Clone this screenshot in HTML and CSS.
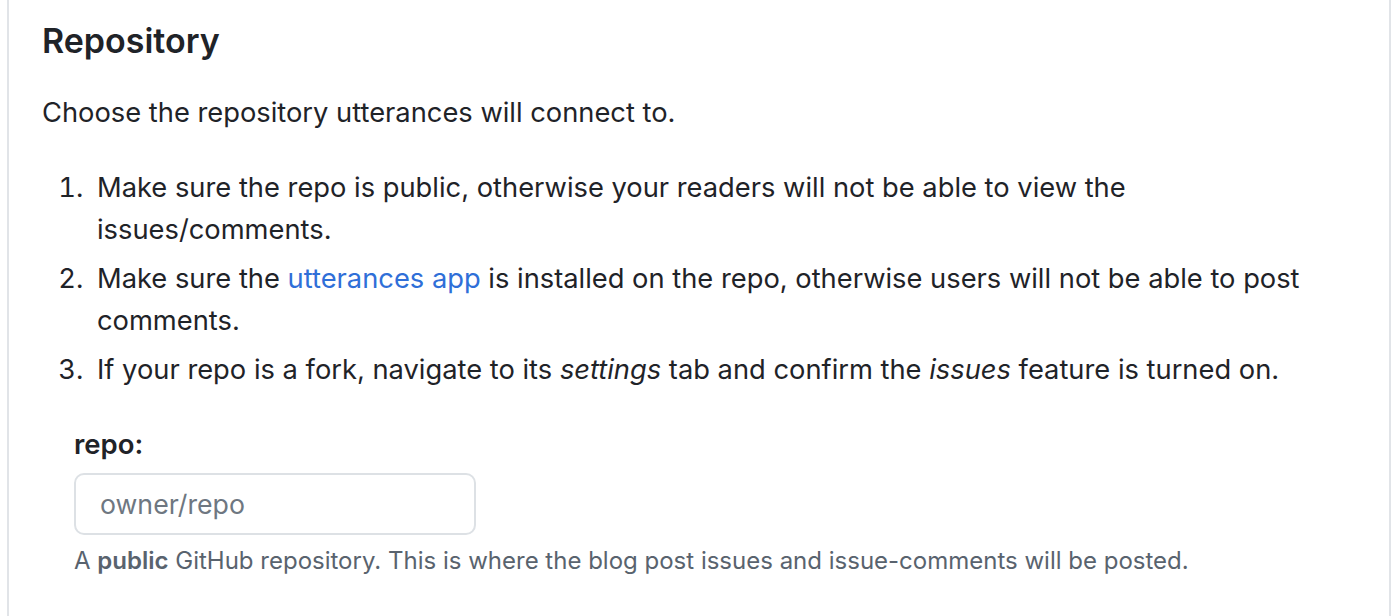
FILE: index.html
```html
<!DOCTYPE html>
<html>
<head>
<meta charset="utf-8">
<link rel="stylesheet" href="styles.css">
</head>
<body>
<div class="box">
  <h3 class="title">Repository</h3>
  <p class="para">Choose the repository utterances will connect to.</p>
  <ol class="steps">
    <li>Make sure the repo is public, otherwise your readers will not be able to view the issues/comments.</li>
    <li>Make sure the <a class="link" href="#">utterances app</a> is installed on the repo, otherwise users will not be able to post comments.</li>
    <li>If your repo is a fork, navigate to its <em>settings</em> tab and confirm the <em>issues</em> feature is turned on.</li>
  </ol>
  <div class="form">
    <label class="label" for="repo">repo:</label>
    <input class="input" id="repo" type="text" placeholder="owner/repo">
    <p class="note">A <strong>public</strong> GitHub repository. This is where the blog post issues and issue-comments will be posted.</p>
  </div>
</div>
</body>
</html>
```

FILE: styles.css
```css
html, body {
  margin: 0;
  padding: 0;
  background: #ffffff;
}
body {
  font-family: Inter, "Noto Sans", "Liberation Sans", sans-serif;
  color: #1f2328;
  font-size: 27.3px;
  line-height: 42px;
  overflow: hidden;
}
.box {
  margin-left: 7px;
  width: 1384px;
  border-left: 2px solid #e1e4e8;
  border-right: 2px solid #e1e4e8;
  padding: 20px 33px 40px 33px;
  box-sizing: border-box;
  min-height: 616px;
}
.title {
  margin: 0 0 29px 0;
  font-size: 34px;
  line-height: 42.5px;
  font-weight: 600;
}
.para {
  margin: 0 0 33px 0;
}
.steps {
  margin: 0 0 32px 0;
  padding-left: 55px;
}
.steps li::marker {
  content: counter(list-item) ".\2002 ";
}
.steps li + li {
  margin-top: 7px;
}
.link {
  color: #2f6fd8;
  text-decoration: none;
}
.form {
  margin-left: 32px;
}
.label {
  display: block;
  font-size: 27.5px;
  font-weight: 600;
  line-height: 42px;
  margin-bottom: 8px;
}
.input {
  display: block;
  box-sizing: border-box;
  width: 402px;
  height: 62px;
  border: 2px solid #dde1e5;
  border-radius: 10px;
  padding: 0 24px;
  font-family: inherit;
  font-size: 26.7px;
  color: #1f2328;
  background: #fff;
  outline: none;
}
.input::placeholder {
  color: #6e7781;
}
.note {
  margin: 8px 0 0 0;
  font-size: 24px;
  color: #59636e;
  line-height: 36px;
}
.note strong {
  font-weight: 600;
}
```
